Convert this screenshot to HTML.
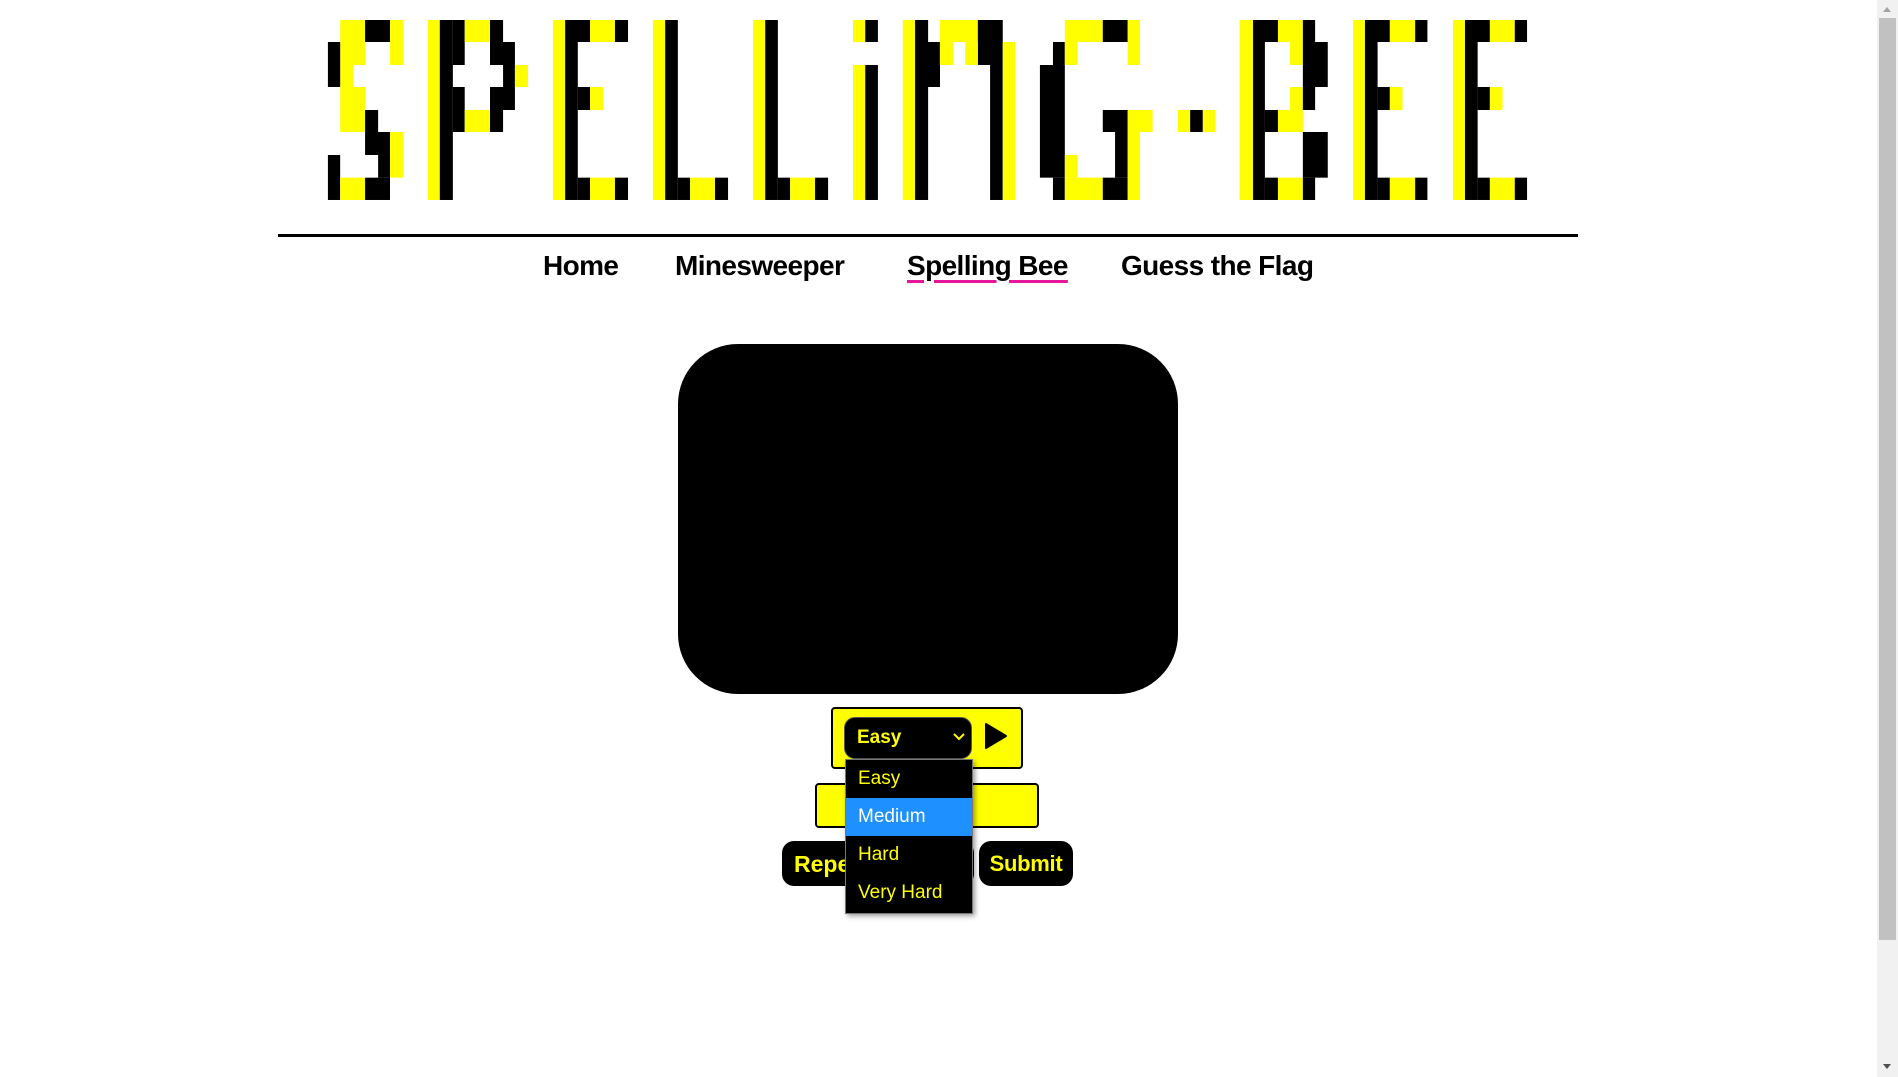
<!DOCTYPE html>
<html><head><meta charset="utf-8">
<style>
html,body{margin:0;padding:0;width:1898px;height:1077px;overflow:hidden;background:#fff;position:relative;font-family:"Liberation Sans",sans-serif;}
.abs{position:absolute;}
.nav{position:absolute;top:248px;font-weight:bold;font-size:28px;letter-spacing:-0.6px;color:#000;white-space:nowrap;line-height:36px;}
.u{text-decoration:underline;text-decoration-color:#e6169b;text-decoration-thickness:3px;text-underline-offset:5px;}
</style></head><body>
<svg class="abs" style="left:0;top:0" width="1898" height="230">
<g transform="translate(320,10) scale(0.3954,0.3333)">
<rect x="51" y="30" width="63" height="135" fill="#ff0"/>
<rect x="51" y="165" width="33" height="66" fill="#ff0"/>
<rect x="51" y="231" width="63" height="135" fill="#ff0"/>
<rect x="114" y="30" width="63" height="66" fill="#000"/>
<rect x="177" y="30" width="33" height="135" fill="#ff0"/>
<rect x="20" y="96" width="31" height="135" fill="#000"/>
<rect x="114" y="300" width="33" height="66" fill="#000"/>
<rect x="114" y="366" width="63" height="69" fill="#000"/>
<rect x="177" y="366" width="33" height="137" fill="#ff0"/>
<rect x="147" y="435" width="30" height="68" fill="#000"/>
<rect x="20" y="435" width="31" height="135" fill="#000"/>
<rect x="51" y="503" width="63" height="67" fill="#ff0"/>
<rect x="114" y="503" width="63" height="67" fill="#000"/>
<rect x="273" y="30" width="30" height="540" fill="#ff0"/>
<rect x="303" y="30" width="33" height="540" fill="#000"/>
<rect x="336" y="30" width="30" height="135" fill="#000"/>
<rect x="336" y="231" width="30" height="135" fill="#000"/>
<rect x="366" y="30" width="64" height="66" fill="#ff0"/>
<rect x="430" y="30" width="33" height="66" fill="#000"/>
<rect x="430" y="96" width="63" height="69" fill="#000"/>
<rect x="463" y="165" width="30" height="66" fill="#000"/>
<rect x="493" y="165" width="33" height="66" fill="#ff0"/>
<rect x="430" y="231" width="63" height="69" fill="#000"/>
<rect x="366" y="300" width="64" height="66" fill="#ff0"/>
<rect x="430" y="300" width="33" height="66" fill="#000"/>
<rect x="589" y="30" width="31" height="540" fill="#ff0"/>
<rect x="620" y="30" width="63" height="66" fill="#000"/>
<rect x="683" y="30" width="63" height="66" fill="#ff0"/>
<rect x="746" y="30" width="33" height="66" fill="#000"/>
<rect x="620" y="96" width="32" height="474" fill="#000"/>
<rect x="652" y="231" width="31" height="69" fill="#000"/>
<rect x="683" y="231" width="33" height="69" fill="#ff0"/>
<rect x="652" y="503" width="31" height="67" fill="#000"/>
<rect x="683" y="503" width="63" height="67" fill="#ff0"/>
<rect x="746" y="503" width="33" height="67" fill="#000"/>
<rect x="842" y="30" width="31" height="540" fill="#ff0"/>
<rect x="873" y="30" width="32" height="540" fill="#000"/>
<rect x="905" y="503" width="31" height="67" fill="#000"/>
<rect x="936" y="503" width="63" height="67" fill="#ff0"/>
<rect x="999" y="503" width="33" height="67" fill="#000"/>
<rect x="1095" y="30" width="31" height="540" fill="#ff0"/>
<rect x="1126" y="30" width="32" height="540" fill="#000"/>
<rect x="1158" y="503" width="31" height="67" fill="#000"/>
<rect x="1189" y="503" width="63" height="67" fill="#ff0"/>
<rect x="1252" y="503" width="33" height="67" fill="#000"/>
<rect x="1348" y="30" width="31" height="66" fill="#ff0"/>
<rect x="1379" y="30" width="32" height="66" fill="#000"/>
<rect x="1348" y="165" width="31" height="405" fill="#ff0"/>
<rect x="1379" y="165" width="32" height="405" fill="#000"/>
<rect x="1474" y="30" width="31" height="540" fill="#ff0"/>
<rect x="1505" y="30" width="33" height="540" fill="#000"/>
<rect x="1538" y="96" width="30" height="135" fill="#000"/>
</g>
<g transform="translate(930,10) scale(0.3954,0.3333)">
<rect x="-10" y="96" width="35" height="135" fill="#000"/>
<rect x="25" y="30" width="96" height="66" fill="#ff0"/>
<rect x="121" y="30" width="63" height="135" fill="#000"/>
<rect x="25" y="96" width="33" height="69" fill="#ff0"/>
<rect x="89" y="96" width="32" height="69" fill="#ff0"/>
<rect x="152" y="165" width="32" height="405" fill="#000"/>
<rect x="184" y="96" width="31" height="474" fill="#ff0"/>
<rect x="341" y="30" width="96" height="66" fill="#ff0"/>
<rect x="437" y="30" width="63" height="66" fill="#000"/>
<rect x="500" y="30" width="31" height="135" fill="#ff0"/>
<rect x="311" y="96" width="30" height="69" fill="#000"/>
<rect x="341" y="96" width="32" height="69" fill="#ff0"/>
<rect x="278" y="165" width="63" height="338" fill="#000"/>
<rect x="311" y="503" width="30" height="67" fill="#000"/>
<rect x="341" y="435" width="32" height="68" fill="#ff0"/>
<rect x="341" y="503" width="96" height="67" fill="#ff0"/>
<rect x="437" y="503" width="63" height="67" fill="#000"/>
<rect x="437" y="300" width="63" height="66" fill="#000"/>
<rect x="500" y="300" width="63" height="66" fill="#ff0"/>
<rect x="468" y="366" width="32" height="137" fill="#000"/>
<rect x="500" y="366" width="31" height="204" fill="#ff0"/>
<rect x="627" y="300" width="31" height="66" fill="#ff0"/>
<rect x="658" y="300" width="32" height="66" fill="#000"/>
<rect x="690" y="300" width="31" height="66" fill="#ff0"/>
<rect x="783" y="30" width="34" height="540" fill="#ff0"/>
<rect x="817" y="30" width="63" height="66" fill="#000"/>
<rect x="880" y="30" width="63" height="66" fill="#ff0"/>
<rect x="943" y="30" width="31" height="66" fill="#000"/>
<rect x="817" y="96" width="30" height="474" fill="#000"/>
<rect x="910" y="96" width="33" height="69" fill="#ff0"/>
<rect x="943" y="96" width="63" height="135" fill="#000"/>
<rect x="910" y="231" width="33" height="69" fill="#ff0"/>
<rect x="943" y="231" width="31" height="69" fill="#000"/>
<rect x="847" y="300" width="33" height="66" fill="#000"/>
<rect x="880" y="300" width="63" height="66" fill="#ff0"/>
<rect x="943" y="366" width="63" height="137" fill="#000"/>
<rect x="847" y="503" width="33" height="67" fill="#000"/>
<rect x="880" y="503" width="63" height="67" fill="#ff0"/>
<rect x="943" y="503" width="31" height="67" fill="#000"/>
<rect x="1070" y="30" width="30" height="540" fill="#ff0"/>
<rect x="1100" y="30" width="63" height="66" fill="#000"/>
<rect x="1163" y="30" width="64" height="66" fill="#ff0"/>
<rect x="1227" y="30" width="31" height="66" fill="#000"/>
<rect x="1100" y="96" width="32" height="474" fill="#000"/>
<rect x="1132" y="231" width="31" height="69" fill="#000"/>
<rect x="1163" y="231" width="32" height="69" fill="#ff0"/>
<rect x="1132" y="503" width="31" height="67" fill="#000"/>
<rect x="1163" y="503" width="64" height="67" fill="#ff0"/>
<rect x="1227" y="503" width="31" height="67" fill="#000"/>
<rect x="1323" y="30" width="30" height="540" fill="#ff0"/>
<rect x="1353" y="30" width="63" height="66" fill="#000"/>
<rect x="1416" y="30" width="63" height="66" fill="#ff0"/>
<rect x="1479" y="30" width="31" height="66" fill="#000"/>
<rect x="1353" y="96" width="32" height="474" fill="#000"/>
<rect x="1385" y="231" width="31" height="69" fill="#000"/>
<rect x="1416" y="231" width="32" height="69" fill="#ff0"/>
<rect x="1385" y="503" width="31" height="67" fill="#000"/>
<rect x="1416" y="503" width="63" height="67" fill="#ff0"/>
<rect x="1479" y="503" width="31" height="67" fill="#000"/>
</g>
</svg>

<div class="abs" style="left:278px;top:234px;width:1300px;height:3px;background:#000"></div>

<div class="nav" style="left:543px">Home</div>
<div class="nav" style="left:675px">Minesweeper</div>
<div class="nav u" style="left:907px">Spelling Bee</div>
<div class="nav" style="left:1121px">Guess the Flag</div>

<div class="abs" style="left:678px;top:344px;width:500px;height:350px;background:#000;border-radius:60px"></div>

<div class="abs" style="left:831px;top:707px;width:188px;height:58px;background:#ff0;border:2px solid #000;border-radius:4px"></div>
<div class="abs" style="left:844px;top:717px;width:126px;height:40px;background:#000;border:1px solid #555;border-radius:11px"></div>
<div class="abs" style="left:857px;top:726px;color:#ff0;font-weight:bold;font-size:19px;line-height:24px">Easy</div>
<svg class="abs" style="left:953px;top:733px" width="12" height="8"><path d="M1 1 L6 6 L11 1" stroke="#ff0" stroke-width="2" fill="none"/></svg>
<svg class="abs" style="left:984px;top:723px" width="24" height="26"><path d="M2 1 L22 13 L2 25 Z" fill="#000" stroke="#000" stroke-linejoin="round" stroke-width="2"/></svg>

<div class="abs" style="left:815px;top:783px;width:220px;height:41px;background:#ff0;border:2px solid #000;border-radius:4px"></div>

<div class="abs" style="left:782px;top:841px;width:192px;height:45px;background:#000;border-radius:12px"></div>
<div class="abs" style="left:794px;top:850px;color:#ff0;font-weight:bold;font-size:23px;line-height:28px">Repeat</div>
<div class="abs" style="left:979px;top:841px;width:94px;height:45px;background:#000;border-radius:12px;color:#ff0;font-weight:bold;font-size:22px;line-height:45px;text-align:center;letter-spacing:-0.3px">Submit</div>

<div class="abs" style="left:845px;top:759px;width:126px;height:153px;background:#000;border:1px solid #777;box-shadow:2px 2px 5px rgba(0,0,0,.4);font-size:19px;line-height:38px">
<div style="color:#ff0;padding-left:12px;height:38px">Easy</div>
<div style="color:#fff;background:#1e90ff;padding-left:12px;height:38px">Medium</div>
<div style="color:#ff0;padding-left:12px;height:38px">Hard</div>
<div style="color:#ff0;padding-left:12px;height:38px">Very Hard</div>
</div>

<div class="abs" style="left:1877px;top:0;width:21px;height:1077px;background:#f1f1f1"></div>
<div class="abs" style="left:1879px;top:18px;width:17px;height:922px;background:#c1c1c1"></div>
<svg class="abs" style="left:1881px;top:5px" width="12" height="8"><path d="M2 7 L6 2 L10 7 Z" fill="#a3a3a3"/></svg>
<svg class="abs" style="left:1881px;top:1063px" width="12" height="8"><path d="M2 1 L6 6 L10 1 Z" fill="#505050"/></svg>
</body></html>
